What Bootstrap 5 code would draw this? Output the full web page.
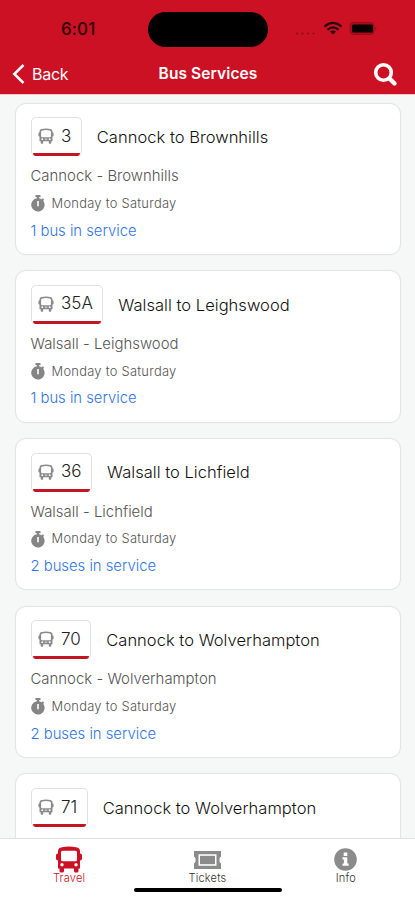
<!DOCTYPE html>
<html lang="en">
<head>
<meta charset="utf-8">
<meta name="viewport" content="width=device-width, initial-scale=1">
<title>Bus Services</title>
<link href="https://cdn.jsdelivr.net/npm/bootstrap@5.3.0/dist/css/bootstrap.min.css" rel="stylesheet">
<style>
  body { font-family: Inter, "Liberation Sans", sans-serif; background: #f6f8f8; height: 900px; overflow: hidden; line-height: 1; }
  .top-area { background: #cc1124; height: 95px; border-bottom: 1px solid #f6c5c9; }
  .status-row { height: 58px; padding-right: 38px; }
  .clock { width: 148px; padding-left: 61px; font-size: 17px; font-weight: 500; color: #2c0508; letter-spacing: .1px; }
  .island { width: 120px; height: 35px; background: #000; }
  .title-row { height: 32px; padding: 0 17px 0 12px; color: #fff; }
  .title-row > * { flex: 1 1 0; }
  .back-text { font-size: 16px; letter-spacing: -.25px; margin-left: 7px; }
  .page-title { font-size: 15.5px; font-weight: 600; letter-spacing: .1px; padding-left: 6px; }
  .service-list { padding: 7.5px 14.5px 0; gap: 15.2px; height: 743px; }
  .service-card { height: 152.5px; flex: none; border: 1px solid #e3e5e5; border-radius: 11px; padding: 13.8px 15px 0; box-shadow: 0 0 2px rgba(0,0,0,.04); }
  .route-tag { height: 39px; border: 1px solid #e0e0e0; border-bottom: 0; border-radius: 5px; padding: 0 9.5px 2px 6.5px; position: relative; gap: 7px; font-size: 17px; font-weight: 300; color: #222; }
  .route-tag::after { content: ""; position: absolute; left: 1px; right: 1px; bottom: 0; height: 3px; background: #c41523; border-radius: 1px 1px 4px 4px; }
  .route-name { font-size: 16.5px; font-weight: 300; color: #111; margin-left: 15px; white-space: nowrap; padding-top: 1px; letter-spacing: .03px; }
  .route-ends { font-size: 14.9px; font-weight: 300; color: #555; margin-top: 13px; height: 16px; letter-spacing: .02px; }
  .route-days { font-size: 12.9px; font-weight: 300; color: #555; margin-top: 10px; height: 18px; gap: 7px; letter-spacing: .27px; }
  .route-days svg { margin-top: -1px; }
  .route-live { font-size: 14.8px; font-weight: 300; color: #2f74e6; margin-top: 10.5px; letter-spacing: 0; }
  .tab-area { height: 62px; border-top: 1px solid #dfe2e2; }
  .tab-item { flex: 1; padding-top: 7px; font-size: 11px; font-weight: 300; color: #333; letter-spacing: .2px; }
  .tab-item .glyph-box { height: 27px; }
  .tab-item.on { color: #cc1124; }
  .home-bar { position: absolute; left: 134px; bottom: 8px; width: 148px; height: 4.5px; background: #000; }
</style>
<script src="https://cdn.jsdelivr.net/npm/bootstrap@5.3.0/dist/js/bootstrap.bundle.min.js"></script>
</head>
<body class="d-flex flex-column">
<svg class="d-none">
  <symbol id="bus" viewBox="0 0 16 16"><path fill="#8a8a8a" fill-rule="evenodd" d="M1.500 3.200Q1.500 1.400 3.500.9 8 0 12.500.9q2 .5 2 2.300v1q1.100.2 1.100 1.200v2q0 1-1.100 1.200v4.600h-1.200V15q0 .8-.8.8h-.9q-.8 0-.8-.8v-1.800H5.200V15q0 .8-.8.8h-.9q-.8 0-.8-.8v-1.800H1.500V8.600Q.4 8.400.4 7.400v-2q0-1 1.100-1.200ZM4.200 2.400q-1.100.2-1.100 1.200v4.700q0 .9.900.9h8q.9 0 .9-.9V3.600q0-1-1.100-1.200Q8 1.800 4.200 2.400ZM4.300 10.200a.95.95 0 1 0 0 1.900.95.950 0 0 0 0-1.900Zm7.400 0a.95.95 0 1 0 0 1.900.95.950 0 0 0 0-1.900Zm-4.900.6v.8h2.400v-.8Z"/></symbol>
  <symbol id="timer" viewBox="0 0 14 17"><path fill-rule="evenodd" d="M4.500 0h5v2H8.200v1.200a6.300 6.300 0 0 1 2.600 1.100l1-1 1.400 1.400-1 1A6.700 6.700 0 1 1 5.800 3.200V2H4.500ZM6.200 6v5.200h1.600V6Z"/></symbol>
</svg>

<header class="top-area flex-shrink-0">
  <div class="status-row d-flex align-items-center">
    <div class="clock">6:01</div>
    <div class="island rounded-pill"></div>
    <div class="d-flex align-items-center ms-auto">
      <svg width="83" height="18" viewBox="0 0 83 18">
        <g fill="#8d0c19"><circle cx="3" cy="13.500" r="1.100"/><circle cx="8.500" cy="13.500" r="1.100"/><circle cx="14" cy="13.500" r="1.100"/><circle cx="19.500" cy="13.500" r="1.100"/></g>
        <g fill="none" stroke="#26040a" stroke-width="2.100"><path d="M30.500 6.600Q39 -1 47.500 6.600"/><path d="M33.500 9.800Q39 5 44.500 9.800"/></g>
        <path d="M36 11.600Q39 9.400 42 11.600L39 14.500Z" fill="#26040a"/>
        <rect x="56" y="2.500" width="24" height="12" rx="3.500" fill="#a80d1d" stroke="#8d0c19" stroke-width=".8"/>
        <rect x="58" y="4.500" width="21" height="8" rx="1.500" fill="#0b0002"/>
        <path d="M81.300 6.500q2 2 0 4Z" fill="#8d0c19"/>
      </svg>
    </div>
  </div>
  <div class="title-row d-flex align-items-center">
    <div class="d-flex align-items-center">
      <svg width="13" height="20" viewBox="0 0 13 20" fill="none" stroke="#fff" stroke-width="2.500"><path d="M11.500 1 2.300 10l9.200 9"/></svg>
      <span class="back-text">Back</span>
    </div>
    <div class="page-title text-center text-nowrap">Bus Services</div>
    <div class="text-end">
      <svg class="d-block ms-auto" width="25" height="25" viewBox="0 0 25 25" fill="none" stroke="#fff"><circle cx="10.500" cy="10.500" r="7.800" stroke-width="3.600"/><path d="m16.500 16.500 5 5" stroke-width="4.400" stroke-linecap="round"/></svg>
    </div>
  </div>
</header>

<main class="service-list d-flex flex-column overflow-hidden flex-shrink-0">
  <article class="service-card bg-white">
    <div class="d-flex align-items-center"><div class="route-tag d-flex align-items-center"><svg width="16" height="16"><use href="#bus"/></svg><span>3</span></div><div class="route-name">Cannock to Brownhills</div></div>
    <div class="route-ends">Cannock - Brownhills</div>
    <div class="route-days d-flex align-items-center"><svg width="14" height="17" fill="#858585"><use href="#timer"/></svg><span>Monday to Saturday</span></div>
    <div class="route-live">1 bus in service</div>
  </article>
  <article class="service-card bg-white">
    <div class="d-flex align-items-center"><div class="route-tag d-flex align-items-center"><svg width="16" height="16"><use href="#bus"/></svg><span>35A</span></div><div class="route-name">Walsall to Leighswood</div></div>
    <div class="route-ends">Walsall - Leighswood</div>
    <div class="route-days d-flex align-items-center"><svg width="14" height="17" fill="#858585"><use href="#timer"/></svg><span>Monday to Saturday</span></div>
    <div class="route-live">1 bus in service</div>
  </article>
  <article class="service-card bg-white">
    <div class="d-flex align-items-center"><div class="route-tag d-flex align-items-center"><svg width="16" height="16"><use href="#bus"/></svg><span>36</span></div><div class="route-name">Walsall to Lichfield</div></div>
    <div class="route-ends">Walsall - Lichfield</div>
    <div class="route-days d-flex align-items-center"><svg width="14" height="17" fill="#858585"><use href="#timer"/></svg><span>Monday to Saturday</span></div>
    <div class="route-live">2 buses in service</div>
  </article>
  <article class="service-card bg-white">
    <div class="d-flex align-items-center"><div class="route-tag d-flex align-items-center"><svg width="16" height="16"><use href="#bus"/></svg><span>70</span></div><div class="route-name">Cannock to Wolverhampton</div></div>
    <div class="route-ends">Cannock - Wolverhampton</div>
    <div class="route-days d-flex align-items-center"><svg width="14" height="17" fill="#858585"><use href="#timer"/></svg><span>Monday to Saturday</span></div>
    <div class="route-live">2 buses in service</div>
  </article>
  <article class="service-card bg-white">
    <div class="d-flex align-items-center"><div class="route-tag d-flex align-items-center"><svg width="16" height="16"><use href="#bus"/></svg><span>71</span></div><div class="route-name">Cannock to Wolverhampton</div></div>
  </article>
</main>

<nav class="tab-area bg-white d-flex position-relative flex-shrink-0">
  <div class="tab-item on d-flex flex-column align-items-center"><div class="glyph-box d-flex align-items-center"><svg width="26" height="27" viewBox="0 0 26 27"><path fill="#cc1124" fill-rule="evenodd" d="M2 5Q2 2 6 1.200 13-.4 20 1.200 24 2 24 5v2.500q2 .2 2 1.800v3.400q0 1.600-2 1.800v8H22.500V25q0 1.500-1.500 1.500h-1.500Q18 26.500 18 25v-2.500H8V25q0 1.500-1.500 1.500H5q-1.500 0-1.500-1.500v-2.500H2v-8Q0 14.300 0 12.700V9.300Q0 7.700 2 7.500ZM6.500 4.800Q5 4.800 5 6.300v7.500q0 1.500 1.500 1.500h13q1.500 0 1.500-1.500V6.300q0-1.500-1.500-1.500ZM6 17a1.700 1.700 0 1 0 0 3.400A1.700 1.700 0 0 0 6 17Zm14 0a1.700 1.700 0 1 0 0 3.400 1.700 1.700 0 0 0 0-3.400Z"/></svg></div><span>Travel</span></div>
  <div class="tab-item d-flex flex-column align-items-center"><div class="glyph-box d-flex align-items-center"><svg width="27" height="18" viewBox="0 0 27 18"><path fill="#8b8b8b" fill-rule="evenodd" d="M0 0h27v5.500l-1.500 1.500v4l1.500 1.500V18H0v-5.500L1.500 11V7L0 5.500ZM4.500 3.300v11.400h18V3.300Z"/><rect x="6" y="4.800" width="15" height="8.400" fill="#8b8b8b"/></svg></div><span>Tickets</span></div>
  <div class="tab-item d-flex flex-column align-items-center"><div class="glyph-box d-flex align-items-center"><svg width="23" height="23" viewBox="0 0 23 23"><circle cx="11.500" cy="11.500" r="11.300" fill="#8b8b8b"/><path fill="#fff" d="M9.700 4.500h3.600v3.500H9.700ZM8.500 9.300h4.800v6.200h1.400v2.300H8.500v-2.300h1.400v-3.900H8.500Z"/></svg></div><span>Info</span></div>
  <div class="home-bar rounded-pill"></div>
</nav>
</body>
</html>
